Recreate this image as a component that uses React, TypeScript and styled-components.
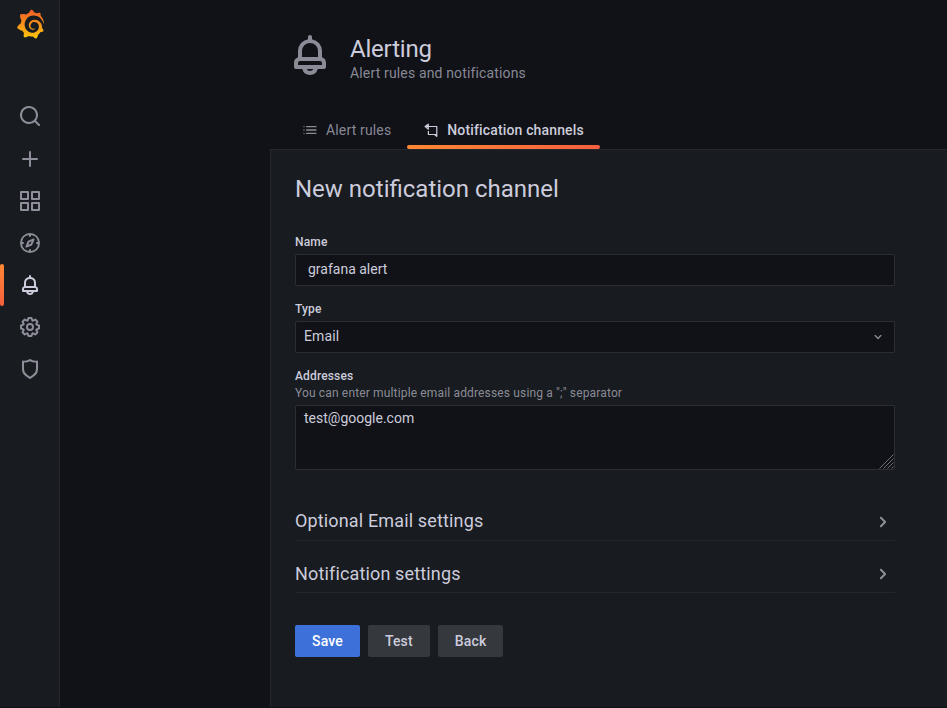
import React from 'react';
import styled, { createGlobalStyle, css } from 'styled-components';
import { SiGrafana } from 'react-icons/si';

const color = {
  canvas: '#111217',
  panel: '#181b1f',
  text: '#ccccdc',
  muted: 'rgba(204, 204, 220, 0.65)',
  weak: 'rgba(204, 204, 220, 0.07)',
  medium: 'rgba(204, 204, 220, 0.15)',
};

const GlobalStyle = createGlobalStyle`
  * { box-sizing: border-box; }
  body {
    margin: 0;
    background: ${color.canvas};
    color: ${color.text};
    font-family: Roboto, 'Liberation Sans', sans-serif;
    font-size: 14px;
    line-height: 22px;
    letter-spacing: 0.01071em;
  }
  h1, h2, h3, p { margin: 0; font-weight: 400; }
`;

const icons = {
  search:
    'M21.71,20.29,18,16.61A9,9,0,1,0,16.61,18l3.68,3.68a1,1,0,0,0,1.42,0A1,1,0,0,0,21.71,20.29ZM11,18a7,7,0,1,1,7-7A7,7,0,0,1,11,18Z',
  plus: 'M19,11H13V5a1,1,0,0,0-2,0v6H5a1,1,0,0,0,0,2h6v6a1,1,0,0,0,2,0V13h6a1,1,0,0,0,0-2Z',
  apps: 'M10,13H3a1,1,0,0,0-1,1v7a1,1,0,0,0,1,1h7a1,1,0,0,0,1-1V14A1,1,0,0,0,10,13ZM9,20H4V15H9ZM21,2H14a1,1,0,0,0-1,1v7a1,1,0,0,0,1,1h7a1,1,0,0,0,1-1V3A1,1,0,0,0,21,2ZM20,9H15V4h5Zm1,4H14a1,1,0,0,0-1,1v7a1,1,0,0,0,1,1h7a1,1,0,0,0,1-1V14A1,1,0,0,0,21,13Zm-1,7H15V15h5ZM10,2H3A1,1,0,0,0,2,3v7a1,1,0,0,0,1,1h7a1,1,0,0,0,1-1V3A1,1,0,0,0,10,2ZM9,9H4V4H9Z',
  compass:
    'M12,2A10,10,0,1,0,22,12,10,10,0,0,0,12,2Zm1,17.93V19a1,1,0,0,0-2,0v.93A8,8,0,0,1,4.07,13H5a1,1,0,0,0,0-2H4.07A8,8,0,0,1,11,4.07V5a1,1,0,0,0,2,0V4.07A8,8,0,0,1,19.93,11H19a1,1,0,0,0,0,2h.93A8,8,0,0,1,13,19.93ZM15.14,7.55l-5,2.12a1,1,0,0,0-.52.52l-2.12,5a1,1,0,0,0,.21,1.1,1,1,0,0,0,.7.3.93.93,0,0,0,.4-.09l5-2.12a1,1,0,0,0,.52-.52l2.12-5a1,1,0,0,0-1.31-1.31Zm-2.49,5.1-2.28,1,1-2.28,2.28-1Z',
  bell: 'M18,13.18V10a6,6,0,0,0-5-5.91V3a1,1,0,0,0-2,0V4.09A6,6,0,0,0,6,10v3.18A3,3,0,0,0,4,16v2a1,1,0,0,0,1,1H8.14a4,4,0,0,0,7.72,0H19a1,1,0,0,0,1-1V16A3,3,0,0,0,18,13.18ZM8,10a4,4,0,0,1,8,0v3H8Zm4,10a2,2,0,0,1-1.72-1h3.44A2,2,0,0,1,12,20Zm6-3H6V16a1,1,0,0,1,1-1H17a1,1,0,0,1,1,1Z',
  cog: 'M21.32,9.55l-1.89-.63.89-1.78A1,1,0,0,0,20.13,6L18,3.87a1,1,0,0,0-1.15-.19l-1.78.89-.63-1.89A1,1,0,0,0,13.5,2h-3a1,1,0,0,0-.95.68L8.92,4.57,7.14,3.68A1,1,0,0,0,6,3.87L3.87,6a1,1,0,0,0-.19,1.15l.89,1.78-1.89.63A1,1,0,0,0,2,10.5v3a1,1,0,0,0,.68.95l1.89.63-.89,1.78A1,1,0,0,0,3.87,18L6,20.13a1,1,0,0,0,1.15.19l1.78-.89.63,1.89a1,1,0,0,0,.95.68h3a1,1,0,0,0,.95-.68l.63-1.89,1.78.89A1,1,0,0,0,18,20.13L20.13,18a1,1,0,0,0,.19-1.15l-.89-1.78,1.89-.63A1,1,0,0,0,22,13.5v-3A1,1,0,0,0,21.32,9.55ZM20,12.78l-1.2.4A2,2,0,0,0,17.64,16l.57,1.14-1.1,1.1L16,17.64a2,2,0,0,0-2.79,1.16l-.4,1.2H11.22l-.4-1.2A2,2,0,0,0,8,17.64l-1.14.57-1.1-1.1L6.36,16A2,2,0,0,0,5.2,13.18L4,12.78V11.22l1.2-.4A2,2,0,0,0,6.36,8L5.79,6.89l1.1-1.1L8,6.36A2,2,0,0,0,10.82,5.2l.4-1.2h1.56l.4,1.2A2,2,0,0,0,16,6.36l1.14-.57,1.1,1.1L17.64,8a2,2,0,0,0,1.16,2.79l1.2.4ZM12,8a4,4,0,1,0,4,4A4,4,0,0,0,12,8Zm0,6a2,2,0,1,1,2-2A2,2,0,0,1,12,14Z',
  shield:
    'M19.63,3.65a1,1,0,0,0-.84-.2,8,8,0,0,1-6.22-1.27,1,1,0,0,0-1.14,0A8,8,0,0,1,5.21,3.45a1,1,0,0,0-.84.2A1,1,0,0,0,4,4.43v7.45a9,9,0,0,0,3.77,7.33l3.65,2.6a1,1,0,0,0,1.16,0l3.65-2.6A9,9,0,0,0,20,11.88V4.43A1,1,0,0,0,19.63,3.65ZM18,11.88a7,7,0,0,1-2.93,5.7L12,19.77,8.93,17.58A7,7,0,0,1,6,11.88V5.58a10,10,0,0,0,6-1.39,10,10,0,0,0,6,1.39Z',
  list: 'M3,6a1,1,0,1,0,0,2a1,1,0,1,0,0-2ZM7,8H21a1,1,0,0,0,0-2H7A1,1,0,0,0,7,8ZM3,11a1,1,0,1,0,0,2a1,1,0,1,0,0-2ZM21,11H7a1,1,0,0,0,0,2H21a1,1,0,0,0,0-2ZM3,16a1,1,0,1,0,0,2a1,1,0,1,0,0-2ZM21,16H7a1,1,0,0,0,0,2H21a1,1,0,0,0,0-2Z',
  down: 'M17,9.17a1,1,0,0,0-1.41,0L12,12.71,8.46,9.17a1,1,0,0,0-1.41,0,1,1,0,0,0,0,1.42l4.24,4.24a1,1,0,0,0,1.42,0L17,10.59A1,1,0,0,0,17,9.17Z',
  right:
    'M14.83,11.29,10.59,7.05a1,1,0,0,0-1.42,0,1,1,0,0,0,0,1.41L12.71,12,9.17,15.54a1,1,0,0,0,0,1.41,1,1,0,0,0,.71.29,1,1,0,0,0,.71-.29l4.24-4.24A1,1,0,0,0,14.83,11.29Z',
};

const Svg = styled.svg<{ $size: number }>`
  display: block;
  flex: none;
  width: ${(p) => p.$size}px;
  height: ${(p) => p.$size}px;
  fill: currentColor;
`;

function Icon({ name, size }: { name: keyof typeof icons; size: number }) {
  return (
    <Svg $size={size} viewBox="0 0 24 24" aria-hidden="true">
      <path d={icons[name]} />
    </Svg>
  );
}

function ChannelsIcon() {
  return (
    <Svg $size={16} viewBox="0 0 16 16" aria-hidden="true">
      <path
        d="M13.800 14.300V4.500H2M5.300 2.300V7M5.200 2.100 2.200 4.500 5.200 7M5.400 9.400V12.500H13.800M11.800 12.700 13.600 14.200"
        fill="none"
        stroke="currentColor"
        strokeWidth="1.2"
        strokeLinecap="round"
        strokeLinejoin="round"
      />
    </Svg>
  );
}

const Page = styled.div`
  display: flex;
  height: 708px;
  overflow: hidden;
  border-bottom: 1px solid #131217;
`;

const SideMenu = styled.nav`
  display: flex;
  flex: none;
  flex-direction: column;
  width: 60px;
  background: ${color.panel};
  border-right: 1px solid ${color.weak};
`;

const Logo = styled.div`
  display: flex;
  justify-content: center;
  height: 95px;
  padding: 9px 0 0 1px;
  svg:last-child { width: 29px; height: 30px; }
`;

const SideItem = styled.div<{ $active?: boolean }>`
  display: flex;
  align-items: center;
  justify-content: center;
  width: 60px;
  height: 42px;
  color: ${(p) => (p.$active ? color.text : color.muted)};
  &:nth-child(2) { margin-bottom: 1px; }
  ${(p) =>
    p.$active &&
    css`
      padding-right: 4px;
      &::before {
        content: '';
        width: 4px;
        height: 42px;
        margin-right: auto;
        border-radius: 2px;
        background: linear-gradient(0deg, #f55f3e, #ff8833);
      }
      svg { margin-right: auto; }
    `}
`;

const Main = styled.main`
  display: flex;
  flex: 1;
  flex-direction: column;
  padding-left: 210px;
`;

const Header = styled.header`
  display: flex;
  height: 111px;
  padding: 31px 0 0 16px;
  color: ${color.muted};
`;

const HeaderText = styled.div`
  padding: 4px 0 0 16px;
`;

const Title = styled.h1`
  margin-bottom: -1px;
  color: ${color.text};
  font-size: 24px;
  line-height: 28px;
  letter-spacing: -0.2px;
`;

const Tabs = styled.div`
  display: flex;
  height: 38px;
  padding-left: 16px;
`;

const Tab = styled.div<{ $active?: boolean }>`
  display: flex;
  position: relative;
  gap: 8px;
  height: 38px;
  padding: 8px 16px 0;
  color: ${(p) => (p.$active ? color.text : color.muted)};
  font-weight: ${(p) => (p.$active ? 500 : 400)};
  svg { margin-top: 3px; }
  ${(p) =>
    p.$active &&
    css`
      &::after {
        content: '';
        position: absolute;
        inset: auto 0 0;
        height: 4px;
        border-radius: 2px;
        background: linear-gradient(270deg, #f55f3e, #ff8833);
      }
    `}
`;

const Panel = styled.section`
  flex: 1;
  padding: 24px 52px 0 24px;
  background: ${color.panel};
  border: solid ${color.weak};
  border-width: 1px 0 0 1px;
`;

const Heading = styled.h2`
  height: 61px;
  font-size: 24px;
  line-height: 30px;
  letter-spacing: 0;
`;

const Form = styled.form`
  width: 600px;
`;

const Field = styled.div`
  margin-bottom: 16px;
`;

const Label = styled.label`
  display: block;
  padding-bottom: 4px;
  font-size: 12px;
  font-weight: 500;
  line-height: 15px;
`;

const Hint = styled.span`
  display: block;
  padding: 2px 0 1px;
  color: ${color.muted};
  font-weight: 400;
  line-height: 14px;
`;

const control = css`
  display: block;
  width: 100%;
  background: ${color.canvas};
  border: 1px solid ${color.medium};
  border-radius: 2px;
  color: ${color.text};
  font: inherit;
  outline: none;
`;

const Input = styled.input`
  ${control}
  height: 32px;
  padding: 0 12px 2px;
  letter-spacing: 0;
`;

const Select = styled.div`
  ${control}
  display: flex;
  align-items: center;
  justify-content: space-between;
  height: 32px;
  padding: 0 8px;
  span { padding-bottom: 2px; }
  svg { color: ${color.muted}; }
`;

const TextAreaBox = styled.div`
  position: relative;
`;

const TextArea = styled.textarea`
  ${control}
  height: 65px;
  padding: 1px 8px;
  letter-spacing: 0;
  resize: none;
`;

const ResizeGrip = styled.svg`
  position: absolute;
  right: 1px;
  bottom: 1px;
  width: 15px;
  height: 15px;
  stroke: #85868a;
  stroke-width: 0.8;
`;

const Collapse = styled.div`
  display: flex;
  align-items: center;
  justify-content: space-between;
  height: 40px;
  margin-bottom: 12px;
  border-bottom: 1px solid ${color.weak};
  svg {
    margin-top: 2px;
    color: ${color.muted};
  }
  & + & h3 { padding-top: 2px; }
`;

const CollapseTitle = styled.h3`
  font-size: 18px;
  line-height: 22px;
  letter-spacing: 0.0083em;
`;

const Sections = styled.div`
  padding-top: 15px;
`;

const Actions = styled.div`
  display: flex;
  gap: 8px;
  padding-top: 20px;
`;

const Button = styled.button<{ $primary?: boolean }>`
  height: 32px;
  padding: 0 17px;
  border: 0;
  border-radius: 2px;
  background: ${(p) => (p.$primary ? '#3d71d9' : '#35383d')};
  color: ${(p) => (p.$primary ? '#fff' : color.text)};
  font: 500 14px/32px Roboto, sans-serif;
  letter-spacing: 0.01071em;
`;

const sideItems: (keyof typeof icons)[] = ['search', 'plus', 'apps', 'compass', 'bell', 'cog', 'shield'];

export default function App() {
  return (
    <Page>
      <GlobalStyle />
      <SideMenu>
        <Logo>
          <svg width="0" height="0" aria-hidden="true">
            <linearGradient id="brand" x1="0" y1="1" x2="0" y2="0">
              <stop offset="0" stopColor="#fcc80c" />
              <stop offset="1" stopColor="#f05a28" />
            </linearGradient>
          </svg>
          <SiGrafana fill="url(#brand)" />
        </Logo>
        {sideItems.map((name) => (
          <SideItem key={name} $active={name === 'bell'}>
            <Icon name={name} size={24} />
          </SideItem>
        ))}
      </SideMenu>
      <Main>
        <Header>
          <Icon name="bell" size={48} />
          <HeaderText>
            <Title>Alerting</Title>
            <p>Alert rules and notifications</p>
          </HeaderText>
        </Header>
        <Tabs>
          <Tab>
            <Icon name="list" size={16} />
            Alert rules
          </Tab>
          <Tab $active>
            <ChannelsIcon />
            Notification channels
          </Tab>
        </Tabs>
        <Panel>
          <Heading>New notification channel</Heading>
          <Form>
            <Field>
              <Label htmlFor="name">Name</Label>
              <Input id="name" defaultValue="grafana alert" />
            </Field>
            <Field>
              <Label>Type</Label>
              <Select>
                <span>Email</span>
                <Icon name="down" size={16} />
              </Select>
            </Field>
            <Field>
              <Label htmlFor="addresses">
                Addresses
                <Hint>You can enter multiple email addresses using a ";" separator</Hint>
              </Label>
              <TextAreaBox>
                <TextArea id="addresses" defaultValue="test@google.com" />
                <ResizeGrip viewBox="0 0 15 15" aria-hidden="true">
                  <path d="M0.500 14.500 14.500 0.500M4.500 14.500 14.500 4.500M8.500 14.500 14.500 8.500M12.500 14.500 14.500 12.500" />
                </ResizeGrip>
              </TextAreaBox>
            </Field>
            <Sections>
              <Collapse>
                <CollapseTitle>Optional Email settings</CollapseTitle>
                <Icon name="right" size={24} />
              </Collapse>
              <Collapse>
                <CollapseTitle>Notification settings</CollapseTitle>
                <Icon name="right" size={24} />
              </Collapse>
            </Sections>
            <Actions>
              <Button type="button" $primary>Save</Button>
              <Button type="button">Test</Button>
              <Button type="button">Back</Button>
            </Actions>
          </Form>
        </Panel>
      </Main>
    </Page>
  );
}
